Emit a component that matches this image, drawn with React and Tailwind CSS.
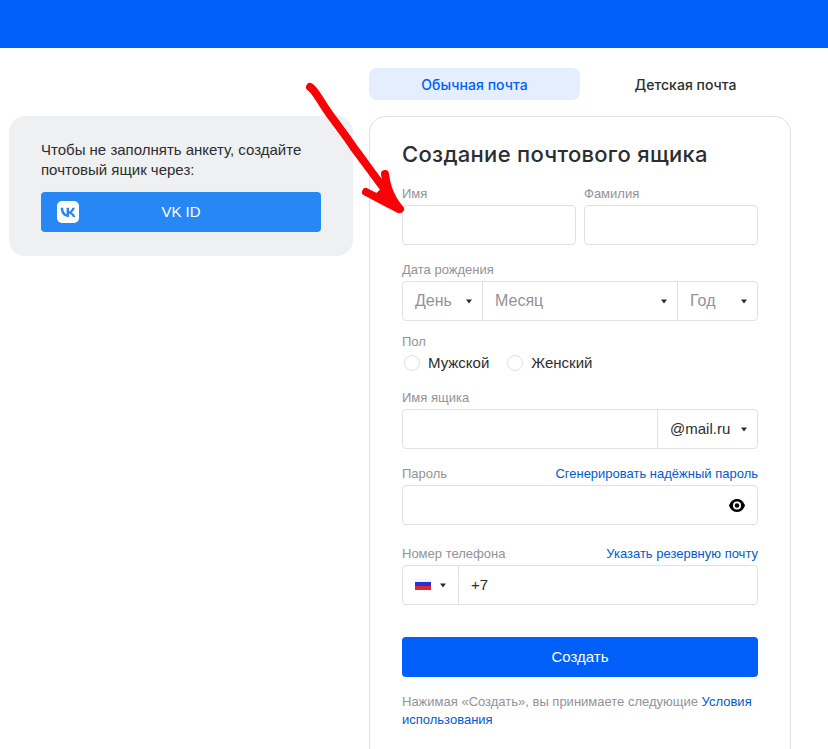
import React from "react";

const Caret = () => (
    <svg width="6" height="5" viewBox="0 0 6 5" className="shrink-0">
        <path d="M0 0.5h6L3 4.600z" fill="#2c2d2e" />
    </svg>
);

const Label = ({ children }) => (
    <label className="block h-4 leading-[18px] text-[13px] text-[#919399]">{children}</label>
);

const FieldLabel = ({ children, link }) => (
    <div className="flex justify-between mb-1">
        <Label>{children}</Label>
        {link && <a className="h-4 leading-[18px] text-[13px] text-[#005bd1]">{link}</a>}
    </div>
);

const Select = ({ text, className }) => (
    <div className={`flex items-center justify-between text-[16px] text-[#919399] ${className}`}>
        <span>{text}</span>
        <Caret />
    </div>
);

const VkLogo = () => (
    <div className="w-[22px] h-[22px] rounded-[5px] bg-white flex items-center justify-center">
        <svg width="18" height="18" viewBox="0 0 24 24">
            <path
                fill="#2787f5"
                d="M12.8 18.6C6.2 18.6 2.4 14 2.2 6.4h3.4c.1 5.6 2.6 8 4.5 8.5V6.4h3.2v4.8c1.9-.2 3.9-2.4 4.6-4.8h3.2c-.5 3-2.8 5.2-4.3 6.100 1.600.7 4.100 2.600 5.100 6.100h-3.500c-.8-2.300-2.600-4.100-5.100-4.400v4.400z"
            />
        </svg>
    </div>
);

const Arrow = () => (
    <svg className="absolute left-[300px] top-[75px] pointer-events-none" width="110" height="145" viewBox="0 0 110 145">
        <path
            d="M10 12 C15 15 19 24 26 34 C34 46 45 59 54 73 C64 86 82 112 100 134"
            fill="none"
            stroke="#fb0007"
            strokeWidth="8"
            strokeLinecap="round"
        />
        <path
            d="M85 99 C86 108 88 118 99 134 C88 129 78 123 66 117"
            fill="none"
            stroke="#fb0007"
            strokeWidth="8"
            strokeLinecap="round"
            strokeLinejoin="round"
        />
        <path d="M85 110 L100 136 L72 122z" fill="#fb0007" />
    </svg>
);

const Radio = ({ text }) => (
    <div className="flex items-center">
        <span className="w-4 h-4 rounded-full border border-[#e0e1e6] bg-white mr-2"></span>
        <span className="text-[15px] text-[#2c2d2e]">{text}</span>
    </div>
);

const App = () => {
    return (
        <div className="relative h-[749px] overflow-hidden bg-white font-['Liberation_Sans',Arial,sans-serif]">
            <div className="h-12 bg-[#005ff9]"></div>

            <div className="flex pl-[9px]">
                <div className="w-[344px] h-[140px] mt-[68px] rounded-2xl bg-[#eff0f2] px-8 pt-6">
                    <p className="text-[15px] leading-5 text-[#2c2d2e]">
                        Чтобы не заполнять анкету, создайте почтовый ящик через:
                    </p>
                    <button className="relative flex items-center justify-center w-[280px] h-10 mt-3 rounded bg-[#2787f5] text-white text-[15px]">
                        <span className="absolute left-4">
                            <VkLogo />
                        </span>
                        VK ID
                    </button>
                </div>

                <div className="w-[422px] ml-4 mt-5">
                    <div className="grid grid-cols-2 h-8 font-['Inter',sans-serif] font-medium text-[14px] tracking-[0.05px]">
                        <div className="flex items-center justify-center rounded-lg bg-[#e5eefe] text-[#005ff9]">Обычная почта</div>
                        <div className="flex items-center justify-center text-[#2c2d2e]">Детская почта</div>
                    </div>

                    <div className="mt-4 h-[700px] rounded-2xl border border-[#e0e1e6] px-8 pt-5">
                        <h1 className="h-8 leading-[34px] font-['Inter',sans-serif] font-medium text-[22px] tracking-[0.3px] text-[#2c2d2e]">
                            Создание почтового ящика
                        </h1>

                        <div className="w-[356px] mt-4">
                            <div className="flex justify-between">
                                <div className="w-[174px]">
                                    <FieldLabel>Имя</FieldLabel>
                                    <div className="h-10 rounded border border-[#e0e1e6]"></div>
                                </div>
                                <div className="w-[174px]">
                                    <FieldLabel>Фамилия</FieldLabel>
                                    <div className="h-10 rounded border border-[#e0e1e6]"></div>
                                </div>
                            </div>

                            <div className="mt-4">
                                <FieldLabel>Дата рождения</FieldLabel>
                                <div className="flex h-10 rounded border border-[#e0e1e6]">
                                    <Select text="День" className="w-[80px] pl-3 pr-[10px] border-r border-[#e0e1e6]" />
                                    <Select text="Месяц" className="w-[195px] pl-3 pr-[10px] border-r border-[#e0e1e6]" />
                                    <Select text="Год" className="flex-1 pl-3 pr-[10px]" />
                                </div>
                            </div>

                            <div className="mt-3">
                                <Label>Пол</Label>
                                <div className="flex items-center h-5 mt-1 pl-[2px] gap-[18px]">
                                    <Radio text="Мужской" />
                                    <Radio text="Женский" />
                                </div>
                            </div>

                            <div className="mt-4">
                                <FieldLabel>Имя ящика</FieldLabel>
                                <div className="flex h-10 rounded border border-[#e0e1e6]">
                                    <div className="flex-1 border-r border-[#e0e1e6]"></div>
                                    <div className="flex items-center justify-between w-[99px] pl-3 pr-[10px] text-[15px] text-[#2c2d2e]">
                                        <span>@mail.ru</span>
                                        <Caret />
                                    </div>
                                </div>
                            </div>

                            <div className="mt-4">
                                <FieldLabel link="Сгенерировать надёжный пароль">Пароль</FieldLabel>
                                <div className="flex items-center justify-end h-10 pr-[12px] rounded border border-[#e0e1e6]">
                                    <svg width="16" height="13" viewBox="0 0 16 13">
                                        <path d="M8 0C4.200 0 1.300 2.700 0 6.500c1.300 3.800 4.200 6.500 8 6.500s6.700-2.700 8-6.500C14.700 2.700 11.800 0 8 0z" fill="#000" />
                                        <circle cx="8" cy="6.500" r="4" fill="#fff" />
                                        <circle cx="8" cy="6.500" r="2.300" fill="#000" />
                                    </svg>
                                </div>
                            </div>

                            <div className="mt-5">
                                <FieldLabel link="Указать резервную почту">Номер телефона</FieldLabel>
                                <div className="flex h-10 rounded border border-[#e0e1e6]">
                                    <div className="flex items-center w-[56px] pl-3 border-r border-[#e0e1e6]">
                                        <div className="w-4 h-[11px] flex flex-col mr-[9px] mb-[2px]">
                                            <span className="flex-1 bg-[#f4f4f6]"></span>
                                            <span className="flex-1 bg-[#2233dd]"></span>
                                            <span className="flex-1 bg-[#e8222c]"></span>
                                        </div>
                                        <Caret />
                                    </div>
                                    <div className="flex items-center pl-3 text-[15px] text-[#2c2d2e]">+7</div>
                                </div>
                            </div>

                            <button className="block w-full h-10 mt-8 rounded bg-[#005ff9] text-white text-[15px]">Создать</button>

                            <p className="mt-4 text-[13px] leading-[18px] text-[#919399]">
                                Нажимая «Создать», вы принимаете следующие <a className="text-[#005bd1]">Условия использования</a>
                            </p>
                        </div>
                    </div>
                </div>
            </div>

            <Arrow />
        </div>
    );
};

export default App;
